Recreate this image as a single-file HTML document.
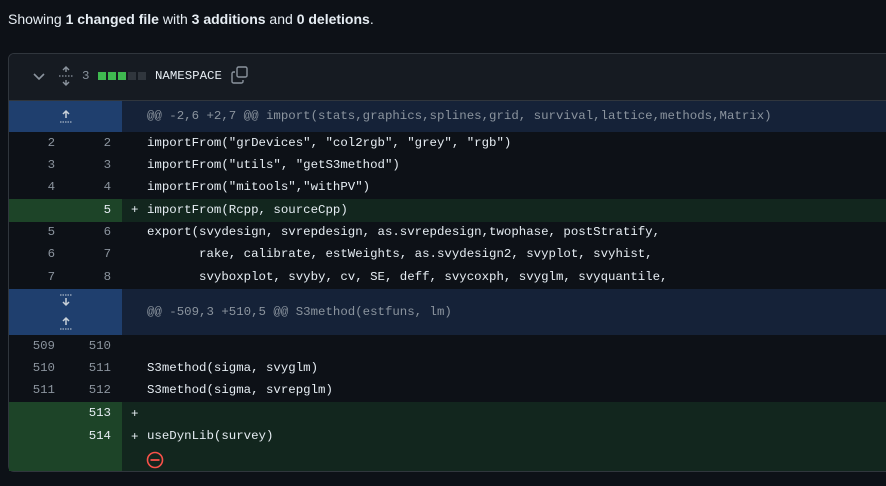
<!DOCTYPE html>
<html><head><meta charset="utf-8"><style>
*{margin:0;padding:0;box-sizing:border-box}
body{width:886px;height:486px;background:#0d1117;font-family:"Liberation Sans",sans-serif;color:#e6edf3;overflow:hidden;position:relative}
.top{position:absolute;left:8px;top:11px;font-size:14px;color:#e6edf3}
.top b{font-weight:700}
.box{position:absolute;left:8px;top:53px;width:900px;height:419px;border:1px solid #30363d;border-radius:6px;overflow:hidden;background:#0d1117}
.hdr{height:47px;background:#161b22;border-bottom:1px solid #30363d;position:relative}
.row{position:absolute;left:0;width:900px;font-family:"Liberation Mono",monospace;font-size:12.4px;white-space:pre}
.n1,.n2{position:absolute;top:0;height:100%;text-align:right;color:#8b949e}
.n1{left:0;width:46px}.n2{left:52px;width:50px}
.g{position:absolute;left:0;top:0;width:113px;height:100%}
.c{position:absolute;left:138px;color:#e6edf3}
.p{position:absolute;left:122px;color:#e6edf3}
.add .g{background:#1d4428}.add{background:#12261e}
.add .n2{color:#e6edf3}
.hunk{background:#152238}.hunk .g{background:#1f3f6e}
.hunk .c{color:#8b949e}
</style></head><body>
<div class="top">Showing <b>1 changed file</b> with <b>3 additions</b> and <b>0 deletions</b>.</div>
<div class="box">
<div class="hdr">
<svg style="position:absolute;left:24px;top:18px" width="12" height="10" viewBox="0 0 12 10"><path d="M1 2l5 5 5-5" stroke="#8b949e" stroke-width="1.6" fill="none"/></svg>
<svg style="position:absolute;left:49px;top:12px" width="16" height="20" viewBox="0 0 16 20"><path d="M8 1v5M5 4l3-3 3 3M8 19v-5M5 16l3 3 3-3" stroke="#8b949e" stroke-width="1.4" fill="none"/><path d="M1 10h14" stroke="#8b949e" stroke-width="1.2" stroke-dasharray="1.5 1.5"/></svg>
<span style="position:absolute;left:73px;top:15px;font-family:'Liberation Mono',monospace;font-size:12.4px;color:#8b949e">3</span>
<span style="position:absolute;left:89px;top:18px;width:8px;height:8px;background:#3fb950"></span>
<span style="position:absolute;left:99px;top:18px;width:8px;height:8px;background:#3fb950"></span>
<span style="position:absolute;left:109px;top:18px;width:8px;height:8px;background:#3fb950"></span>
<span style="position:absolute;left:119px;top:18px;width:8px;height:8px;background:#30363d"></span>
<span style="position:absolute;left:129px;top:18px;width:8px;height:8px;background:#30363d"></span>
<span style="position:absolute;left:146px;top:15px;font-family:'Liberation Mono',monospace;font-size:12.4px;color:#e6edf3">NAMESPACE</span>
<svg style="position:absolute;left:222px;top:12px" width="18" height="18" viewBox="0 0 18 18"><rect x="6" y="1" width="10" height="10" rx="1.5" stroke="#8b949e" stroke-width="1.4" fill="none"/><path d="M4 6H2.5A1.5 1.5 0 0 0 1 7.5v8A1.5 1.5 0 0 0 2.5 17h8a1.5 1.5 0 0 0 1.5-1.5V14" stroke="#8b949e" stroke-width="1.4" fill="none"/></svg>
</div>
</div>
<div style="position:absolute;left:9px;top:0;width:900px">
<div class="row hunk" style="top:101px;height:31px;line-height:31px"><div class="g"><svg style="position:absolute;left:49px;top:7px" width="16" height="16" viewBox="0 0 16 16"><path d="M8 3v7M5 6l3-3 3 3" stroke="#c9d1d9" stroke-width="1.5" fill="none"/><path d="M2 14h12" stroke="#c9d1d9" stroke-width="1" stroke-dasharray="1.5 1"/></svg></div><span class="c">@@ -2,6 +2,7 @@ import(stats,graphics,splines,grid, survival,lattice,methods,Matrix)</span></div>
<div class="row" style="top:132px;height:22px;line-height:22px"><span class="n1">2</span><span class="n2">2</span><span class="c">importFrom("grDevices", "col2rgb", "grey", "rgb")</span></div>
<div class="row" style="top:154px;height:22px;line-height:22px"><span class="n1">3</span><span class="n2">3</span><span class="c">importFrom("utils", "getS3method")</span></div>
<div class="row" style="top:176px;height:22px;line-height:22px"><span class="n1">4</span><span class="n2">4</span><span class="c">importFrom("mitools","withPV")</span></div>
<div class="row add" style="top:199px;height:23px;line-height:23px"><div class="g"></div><span class="n2">5</span><span class="p">+</span><span class="c">importFrom(Rcpp, sourceCpp)</span></div>
<div class="row" style="top:221px;height:22px;line-height:22px"><span class="n1">5</span><span class="n2">6</span><span class="c">export(svydesign, svrepdesign, as.svrepdesign,twophase, postStratify,</span></div>
<div class="row" style="top:243px;height:22px;line-height:22px"><span class="n1">6</span><span class="n2">7</span><span class="c">       rake, calibrate, estWeights, as.svydesign2, svyplot, svyhist,</span></div>
<div class="row" style="top:266px;height:22px;line-height:22px"><span class="n1">7</span><span class="n2">8</span><span class="c">       svyboxplot, svyby, cv, SE, deff, svycoxph, svyglm, svyquantile,</span></div>
<div class="row hunk" style="top:289px;height:46px;line-height:46px"><div class="g"><svg style="position:absolute;left:49px;top:4px" width="16" height="38" viewBox="0 0 16 38"><path d="M2 2h12" stroke="#c9d1d9" stroke-width="1" stroke-dasharray="1.5 1"/><path d="M8 5v7M5 9l3 3 3-3M8 25v7M5 28l3-3 3 3" stroke="#c9d1d9" stroke-width="1.5" fill="none"/><path d="M2 36h12" stroke="#c9d1d9" stroke-width="1" stroke-dasharray="1.5 1"/></svg></div><span class="c">@@ -509,3 +510,5 @@ S3method(estfuns, lm)</span></div>
<div class="row" style="top:335px;height:22px;line-height:22px"><span class="n1">509</span><span class="n2">510</span></div>
<div class="row" style="top:357px;height:22px;line-height:22px"><span class="n1">510</span><span class="n2">511</span><span class="c">S3method(sigma, svyglm)</span></div>
<div class="row" style="top:379px;height:23px;line-height:22px"><span class="n1">511</span><span class="n2">512</span><span class="c">S3method(sigma, svrepglm)</span></div>
<div class="row add" style="top:402px;height:69px;line-height:22px"><div class="g"></div>
<span class="n2" style="height:22px;top:0">513</span><span class="p" style="top:1px">+</span>
<span class="n2" style="height:22px;top:23px">514</span><span class="p" style="top:24px">+</span><span class="c" style="top:23px">useDynLib(survey)</span>
<svg style="position:absolute;left:137px;top:49px" width="18" height="18" viewBox="0 0 18 18"><circle cx="9" cy="9" r="7.5" stroke="#f85149" stroke-width="1.6" fill="none"/><path d="M4.5 9h9" stroke="#f85149" stroke-width="1.8"/></svg>
</div>
</div>
</body></html>
